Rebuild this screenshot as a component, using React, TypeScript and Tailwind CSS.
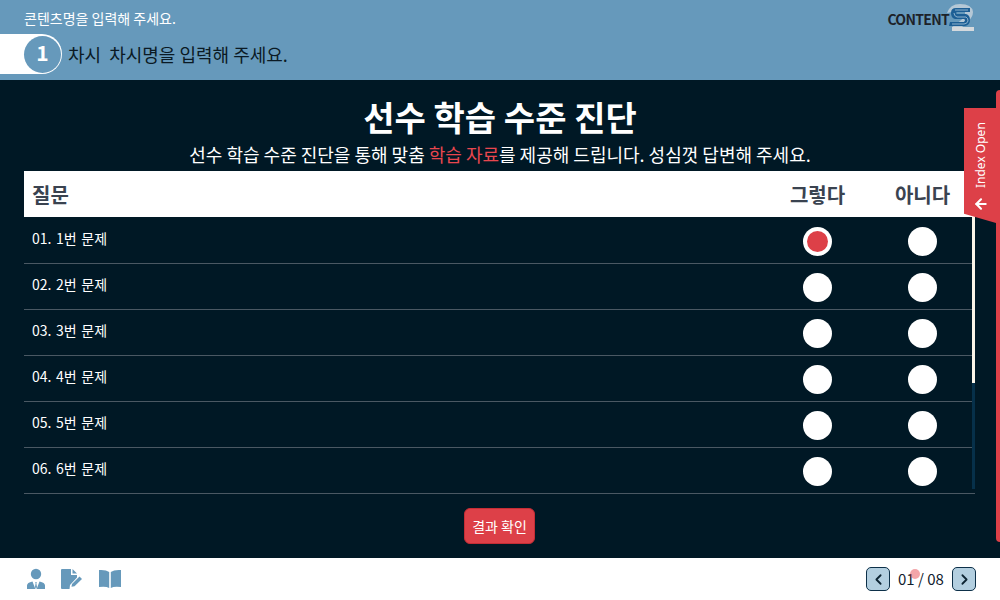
import { ArrowLeft, ChevronLeft, ChevronRight } from "lucide-react";

const questions = ["01. 1번 문제", "02. 2번 문제", "03. 3번 문제", "04. 4번 문제", "05. 5번 문제", "06. 6번 문제"];

function Radio({ checked = false }: { checked?: boolean }) {
  return (
    <span className="flex h-[29px] w-[29px] translate-y-[1px] items-center justify-center rounded-full bg-white">
      {checked && <span className="h-[21px] w-[21px] rounded-full bg-[#dd4048]" />}
    </span>
  );
}

function Logo() {
  return (
    <div className="flex items-start pr-[25px] pt-[3px]">
      <span className="relative z-10 mt-[9px] text-[14px] font-bold leading-[14px] tracking-[-0.7px] text-[#1d2229]">CONTENT</span>
      <svg width="29" height="29" viewBox="0 0 29 29" className="-ml-[3px]">
        <path d="M1 10 Q4 1 14 1 Q26 1 27 9 Q27 14 21 20 L16 24 L6 24 L14 18 Q20 13 19 9 L6 9 Z" fill="#b5c8d6" />
        <path d="M6 24 L28 24 L28 28 L6 28 Z" fill="#d4d9dd" />
        <path d="M5 10 Q5 5 10 5 L24 5 L24 9 L11 9 Q9 10 11 11 L20 11 Q24 12 24 17 Q24 22 19 23 L3 23 L4 19 L18 19 Q20 17 18 16 L9 16 Q5 15 5 10 Z" fill="#1d5f95" />
        <path d="M9 7 L22 7 M8 10 Q8 13 11 14 L20 14 Q22 15 22 18 Q21 21 18 21 L6 21" fill="none" stroke="#a9c6da" strokeWidth="0.8" />
      </svg>
    </div>
  );
}

function FooterIcons() {
  return (
    <div className="flex items-center gap-[14px] pl-[26px]">
      <svg width="20" height="22" viewBox="0 0 20 22" fill="#6699bb">
        <circle cx="10" cy="6" r="5.200" />
        <path d="M1 21 L1 17.500 Q1 14.500 6.500 13.500 L9 20 L9.400 21 Z M19 21 L19 17.500 Q19 14.500 13.500 13.500 L11 20 L10.600 21 Z" />
        <path d="M9.300 14 L10.700 14 L10.400 15.500 L11 19 L10 21 L9 19 L9.600 15.500 Z" />
      </svg>
      <svg width="24" height="22" viewBox="0 0 24 22">
        <path d="M2 1 L11 1 L11 7 L17 7 L17 9.500 L10 17 L9.500 21 L2 21 Q1 21 1 20 L1 2 Q1 1 2 1 Z" fill="#6699bb" />
        <path d="M12.500 1 L17 5.500 L12.500 5.500 Z" fill="#6699bb" />
        <path d="M11.500 18.800 L12 16 L19.500 8.500 L22 11 L14.500 18.300 Z" fill="#6699bb" />
      </svg>
      <svg width="24" height="20" viewBox="0 0 24 20" fill="#6699bb">
        <path d="M11.200 3 Q8 0.500 1 1 L1 18 Q8 17 11.200 19 Z" />
        <path d="M12.800 3 Q16 0.500 23 1 L23 18 Q16 17 12.800 19 Z" />
      </svg>
    </div>
  );
}

export default function App() {
  return (
    <div className="relative flex h-[600px] w-[1000px] flex-col overflow-hidden bg-white font-['Noto_Sans_CJK_KR','Noto_Sans',sans-serif]">
      <header className="flex h-[80px] flex-col bg-[#6699bb]">
        <div className="flex h-[34px] items-start justify-between">
          <p className="pl-[24px] pt-[8px] text-[14px] leading-[20px] text-white">콘텐츠명을 입력해 주세요.</p>
          <Logo />
        </div>
        <div className="flex h-[40px] items-center">
          <div className="flex h-[40px] w-[62px] items-center justify-end rounded-r-[20px] bg-white pr-[1px]">
            <span className="flex h-[37px] w-[37px] items-center justify-center rounded-full bg-[#6699bb] pb-[3px] text-[21px] font-bold leading-none text-white">1</span>
          </div>
          <p className="whitespace-pre pl-[6px] text-[18px] leading-[26px] text-[#0b1a24]">차시  차시명을 입력해 주세요.</p>
        </div>
      </header>

      <main className="flex flex-1 flex-col bg-[#001825] px-[24px] text-white">
        <h1 className="h-[46px] pt-[14px] text-center text-[34px] font-bold leading-[46px]">선수 학습 수준 진단</h1>
        <p className="h-[45px] pt-[14px] text-center text-[18px] leading-[28px]">
          선수 학습 수준 진단을 통해 맞춤 <span className="text-[#e8474f]">학습 자료</span>를 제공해 드립니다. 성심껏 답변해 주세요.
        </p>

        <div className="flex h-[46px] w-[951px] items-center bg-white pl-[8px] text-[#3a4350]">
          <span className="flex-1 translate-y-[1px] text-[20px] font-bold">질문</span>
          <span className="w-[105px] translate-y-[1px] text-center text-[20px] font-bold">그렇다</span>
          <span className="w-[105px] translate-y-[1px] text-center text-[20px] font-bold">아니다</span>
        </div>

        <div className="relative w-[951px]">
          <ul>
            {questions.map((q, i) => (
              <li
                key={q}
                className={`flex items-center border-b border-[#4a5863] pl-[8px] ${i === 0 ? "h-[47px] pt-[1px]" : "h-[46px]"} ${i === 5 ? "" : "mr-[2px]"}`}
              >
                <span className="flex-1 -translate-y-[3px] text-[14px] leading-[20px] [word-spacing:1.5px]">{q}</span>
                <span className={`flex justify-center ${i === 5 ? "w-[105px]" : "w-[109px]"}`}>
                  <Radio checked={i === 0} />
                </span>
                <span className={`flex justify-center ${i === 5 ? "w-[105px]" : "w-[101px]"}`}>
                  <Radio />
                </span>
              </li>
            ))}
          </ul>
          <div className="absolute right-0 top-0 h-[272px] w-[3px] bg-[#06304a]">
            <div className="h-[166px] w-[3px] bg-[#fbf5e8]" />
          </div>
        </div>

        <div className="flex justify-center pr-[1px] pt-[14px]">
          <button className="flex h-[36px] w-[71px] items-center justify-center rounded-[6px] border border-[#c42d35] bg-[#dd4048] text-[14px] text-white">
            결과 확인
          </button>
        </div>
      </main>

      <footer className="flex h-[42px] items-center justify-between bg-white">
        <FooterIcons />
        <div className="flex items-center pr-[24px]">
          <button className="flex h-[24px] w-[24px] items-center justify-center rounded-[5px] border border-[#0d3049] bg-[#b3cfe0] text-[#0d2433]">
            <ChevronLeft size={17} strokeWidth={2.5} />
          </button>
          <span className="relative w-[62px] text-center text-[15px] text-[#10202c]">
            01 / 08
            <span className="absolute left-[20px] top-[1px] h-[10px] w-[10px] rounded-full bg-[#e84b53] opacity-50" />
          </span>
          <button className="flex h-[24px] w-[24px] items-center justify-center rounded-[5px] border border-[#0d3049] bg-[#b3cfe0] text-[#0d2433]">
            <ChevronRight size={17} strokeWidth={2.5} />
          </button>
        </div>
      </footer>

      {/* index drawer */}
      <div className="absolute right-0 top-[90px] h-[452px] w-[4px] rounded-l-[4px] bg-[#dd4048]" />
      <div className="absolute right-[4px] top-[108px] flex h-[115px] w-[32px] flex-col items-center bg-[#dd4048] pl-[2px] pt-[14px] text-white [clip-path:polygon(0_0,100%_0,100%_100%,0_92%)]">
        <span className="h-[66px] rotate-180 text-[12px] leading-[30px] [font-family:'Noto_Sans',sans-serif] [writing-mode:vertical-rl]">Index Open</span>
        <ArrowLeft size={16} strokeWidth={3.2} className="mt-[8px] -ml-[1px]" />
      </div>
    </div>
  );
}
